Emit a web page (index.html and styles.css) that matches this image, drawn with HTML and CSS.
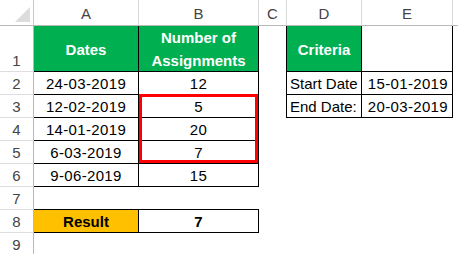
FILE: index.html
```html
<!DOCTYPE html>
<html>
<head>
<meta charset="utf-8">
<link rel="stylesheet" href="styles.css">
</head>
<body>
<div class="sheet">
  <!-- header row -->
  <div class="corner"><svg width="33" height="25" viewBox="0 0 33 25"><polygon points="30,7 30,22 15,22" fill="#dcdcdc"/></svg></div>
  <div class="ch">A</div>
  <div class="ch">B</div>
  <div class="ch">C</div>
  <div class="ch">D</div>
  <div class="ch">E</div>
  <div class="ch last"></div>

  <!-- row 1 -->
  <div class="rh bottom">1</div>
  <div class="c b green bold">Dates</div>
  <div class="c b green bold two">Number of<br>Assignments</div>
  <div class="c r"></div>
  <div class="c b green bold">Criteria</div>
  <div class="c b"></div>
  <div class="c"></div>

  <!-- row 2 -->
  <div class="rh">2</div>
  <div class="c b num">24-03-2019</div>
  <div class="c b num">12</div>
  <div class="c r"></div>
  <div class="c b left">Start Date</div>
  <div class="c b right num">15-01-2019</div>
  <div class="c"></div>

  <!-- row 3 -->
  <div class="rh">3</div>
  <div class="c b num">12-02-2019</div>
  <div class="c b num">5</div>
  <div class="c r"></div>
  <div class="c b left">End Date:</div>
  <div class="c b right num">20-03-2019</div>
  <div class="c"></div>

  <!-- row 4 -->
  <div class="rh">4</div>
  <div class="c b num">14-01-2019</div>
  <div class="c b num">20</div>
  <div class="c"></div><div class="c"></div><div class="c"></div><div class="c"></div>

  <!-- row 5 -->
  <div class="rh">5</div>
  <div class="c b num">6-03-2019</div>
  <div class="c b num">7</div>
  <div class="c"></div><div class="c"></div><div class="c"></div><div class="c"></div>

  <!-- row 6 -->
  <div class="rh">6</div>
  <div class="c b num">9-06-2019</div>
  <div class="c b num">15</div>
  <div class="c"></div><div class="c"></div><div class="c"></div><div class="c"></div>

  <!-- row 7 -->
  <div class="rh">7</div>
  <div class="c u"></div>
  <div class="c u"></div>
  <div class="c"></div><div class="c"></div><div class="c"></div><div class="c"></div>

  <!-- row 8 -->
  <div class="rh">8</div>
  <div class="c b gold bold">Result</div>
  <div class="c b bold num">7</div>
  <div class="c"></div><div class="c"></div><div class="c"></div><div class="c"></div>

  <!-- row 9 -->
  <div class="rh">9</div>
  <div class="c"></div><div class="c"></div><div class="c"></div><div class="c"></div><div class="c"></div><div class="c"></div>

  <div class="sel"></div>
</div>
</body>
</html>
```

FILE: styles.css
```css
* { box-sizing: border-box; }
html, body { margin: 0; padding: 0; background: #fff; }
body {
  font-family: "Liberation Sans", Arial, sans-serif;
  font-size: 15px;
  color: #000;
  overflow: hidden;
}
.sheet {
  position: relative;
  display: grid;
  grid-template-columns: 34px 105px 120px 28px 75px 91px 5px;
  grid-template-rows: 26px 46px repeat(8, 23px);
  width: 458px;
  height: 254px;
  overflow: hidden;
}
.corner {
  border-right: 1px solid #c8c8c8;
  border-bottom: 1px solid #b8b8b8;
}
.corner svg { display: block; }
.ch {
  display: flex;
  align-items: center;
  justify-content: center;
  color: #444;
  border-right: 1px solid #d8d8d8;
  border-bottom: 1px solid #b8b8b8;
  padding-top: 1px;
}
.ch.last { border-right: none; }
.rh {
  display: flex;
  align-items: center;
  justify-content: center;
  color: #444;
  border-right: 1px solid #b8b8b8;
  border-bottom: 1px solid #dedede;
}
.rh.bottom { align-items: flex-end; padding-bottom: 2px; }
.c {
  display: flex;
  align-items: center;
  justify-content: center;
  text-align: center;
  white-space: nowrap;
  padding-top: 1px;
}
.c.b {
  border-right: 1px solid #000;
  border-bottom: 1px solid #000;
}
.c.r { border-right: 1px solid #000; }
.c.u { border-bottom: 1px solid #000; }
.left { justify-content: flex-start; padding-left: 3px; }
.right { justify-content: flex-end; padding-right: 4px; }
.num { letter-spacing: 0.35px; }
.bold { font-weight: bold; }
.green { background: #00b050; color: #fff; }
.gold { background: #ffc000; }
.two { line-height: 23px; }
.sel {
  position: absolute;
  grid-column: 3 / 4;
  grid-row: 4 / 7;
  top: -1px;
  left: 0;
  right: 1px;
  bottom: 1px;
  border: 3px solid #ff0000;
  z-index: 2;
}
```
